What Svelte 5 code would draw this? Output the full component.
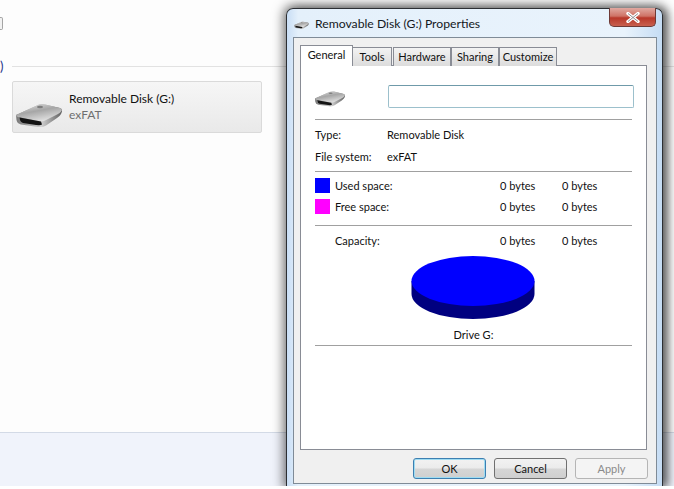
<script>
  const tabs = ['Tools', 'Hardware', 'Sharing', 'Customize'];
</script>

<svg class="defs" width="0" height="0" aria-hidden="true">
  <defs>
    <linearGradient id="topFace" x1="0" y1="0" x2="0.5" y2="1">
      <stop offset="0" stop-color="#e6e6e6" />
      <stop offset="0.5" stop-color="#a6a6a6" />
      <stop offset="1" stop-color="#dedede" />
    </linearGradient>
    <linearGradient id="frontFace" x1="0" y1="0" x2="1" y2="0">
      <stop offset="0" stop-color="#777" />
      <stop offset="0.55" stop-color="#cfcfcf" />
      <stop offset="1" stop-color="#5f5f5f" />
    </linearGradient>
    <symbol id="drive" viewBox="0 0 48 26">
      <path d="M1 13 L23 3 Q26 1.6 30 2.4 L45 6 Q47.5 7 47 9.5 L46 12 Q45 14 42 16 L31 23.5 Q28 25.5 23 25 L6 22.5 Q2 21.5 1.5 18 Z" fill="url(#frontFace)" />
      <path d="M1 13 L23 3 Q26 1.6 30 2.4 L45 6 Q47.5 7 46.5 9 Q45 11 42 12.5 L29 19 Q27 19.5 24 19 L3 15 Q1 14.5 1 13 Z" fill="url(#topFace)" />
      <path d="M4.5 15.5 L26 19.5 L27 22.5 Q26 23.5 21 23 L8 21 Q5 20 4.5 15.5 Z" fill="#141414" />
      <ellipse cx="25" cy="5" rx="3" ry="1.2" fill="#7d7d7d" />
    </symbol>
  </defs>
</svg>

<div class="screen">
  <main class="explorer">
    <div class="pane">
      <span class="checkbox"></span>
      <div class="section"><span class="paren">)</span><span class="rule"></span></div>
      <div class="card">
        <svg class="card-icon"><use href="#drive" /></svg>
        <div class="card-text">
          <div class="card-name">Removable Disk (G:)</div>
          <div class="card-fs">exFAT</div>
        </div>
      </div>
    </div>
    <div class="details"></div>
  </main>

  <section class="window">
    <header class="titlebar">
      <svg class="title-icon"><use href="#drive" /></svg>
      <span class="title">Removable Disk (G:) Properties</span>
      <button class="close" aria-label="Close">
        <svg width="16" height="11" viewBox="0 0 16 11">
          <path d="M3 1.5 L13 9.5 M13 1.5 L3 9.5" stroke="#fff" stroke-width="3.4" stroke-linecap="round" />
          <path d="M3 1.5 L13 9.5 M13 1.5 L3 9.5" stroke="#8f8f94" stroke-width="1" />
        </svg>
      </button>
    </header>

    <div class="client">
      <nav class="tabs">
        <span class="tab active">General</span>
        {#each tabs as tab}
          <span class="tab">{tab}</span>
        {/each}
      </nav>

      <div class="panel">
        <div class="name-row">
          <svg class="name-icon"><use href="#drive" /></svg>
          <input class="name-input" aria-label="Volume label" />
        </div>
        <hr />
        <div class="row type"><span class="label">Type:</span><span>Removable Disk</span></div>
        <div class="row fs"><span class="label">File system:</span><span>exFAT</span></div>
        <hr class="hr-fs" />
        <div class="space used">
          <i class="swatch blue"></i><span class="space-label">Used space:</span><span class="v1">0 bytes</span><span class="v2">0 bytes</span>
        </div>
        <div class="space free">
          <i class="swatch magenta"></i><span class="space-label">Free space:</span><span class="v1">0 bytes</span><span class="v2">0 bytes</span>
        </div>
        <hr class="hr-space" />
        <div class="space capacity">
          <i class="swatch none"></i><span class="space-label">Capacity:</span><span class="v1">0 bytes</span><span class="v2">0 bytes</span>
        </div>
        <svg class="pie" width="124" height="64" viewBox="0 0 124 64">
          <path d="M0.5 25 V38 A61.5 25 0 0 0 123.5 38 V25 Z" fill="#000080" />
          <ellipse cx="62" cy="25" rx="61.5" ry="25" fill="#0000ff" />
        </svg>
        <div class="drive-label">Drive G:</div>
        <hr class="hr-drive" />
      </div>

      <footer class="buttons">
        <button class="btn default">OK</button>
        <button class="btn">Cancel</button>
        <button class="btn disabled">Apply</button>
      </footer>
    </div>
  </section>
</div>

<style>
  :global(body) {
    margin: 0;
    background: #fff;
  }
  .defs {
    position: absolute;
  }
  .screen {
    position: relative;
    width: 674px;
    height: 486px;
    overflow: hidden;
    font-family: "Lato", "Open Sans", sans-serif;
    font-size: 11px;
    color: #111;
  }
  .explorer {
    display: flex;
    flex-direction: column;
    height: 486px;
  }
  .pane {
    height: 433px;
    background: #fdfdfd;
    border-bottom: 1px solid #d3dae6;
    box-sizing: border-box;
    padding-top: 17px;
  }
  .checkbox {
    display: block;
    width: 2px;
    height: 11px;
    border: 1px solid #a5a5a5;
    border-left: 0;
    border-radius: 0 2px 2px 0;
    background: #f2f2f2;
  }
  .section {
    display: flex;
    align-items: center;
    margin-top: 24px;
    height: 24px;
  }
  .paren {
    width: 12px;
    color: #1e3287;
    font-size: 13px;
  }
  .rule {
    flex: 1;
    height: 1px;
    background: #e2e2e2;
  }
  .card {
    display: flex;
    align-items: flex-start;
    box-sizing: border-box;
    width: 250px;
    height: 52px;
    margin: 3px 0 0 12px;
    border: 1px solid #dadada;
    border-radius: 2px;
    background: linear-gradient(#f6f6f6, #e9e9e9);
  }
  .card-icon {
    width: 48px;
    height: 26px;
    margin: 20px 0 0 2px;
    flex: none;
    filter: blur(0.4px);
  }
  .card-text {
    margin: 9px 0 0 6px;
    font-size: 12px;
    line-height: 16px;
  }
  .card-name {
    color: #111;
    white-space: nowrap;
  }
  .card-fs {
    color: #6f6f6f;
  }
  .details {
    flex: 1;
    background: #f0f3fb;
  }

  .window {
    position: absolute;
    left: 286px;
    top: 8px;
    width: 377px;
    height: 478px;
    box-sizing: border-box;
    border: 1px solid #2c2f33;
    border-bottom: 0;
    border-radius: 7px 7px 0 0;
    background: linear-gradient(90deg, #c9def5, #e4f0fb 3%, #e9f3fc 90%, #c5dcf4);
    box-shadow: 0 0 11px 3px rgba(0, 0, 0, 0.5), 5px 0 9px rgba(0, 0, 0, 0.35);
    display: flex;
    flex-direction: column;
    padding: 0 5px 2px 6px;
  }
  .titlebar {
    position: relative;
    display: flex;
    align-items: center;
    height: 28px;
    flex: none;
  }
  .title-icon {
    width: 15px;
    height: 10px;
    margin: 3px 0 0 1px;
    flex: none;
    filter: blur(0.3px);
  }
  .title {
    margin: 0 0 0 6px;
    font-size: 12.2px;
    color: #14181c;
    white-space: nowrap;
  }
  .close {
    position: absolute;
    right: 1px;
    top: -1px;
    width: 47px;
    height: 19px;
    padding: 0;
    display: flex;
    align-items: center;
    justify-content: center;
    border: 1px solid #6e3a36;
    border-top: 0;
    border-radius: 0 0 5px 5px;
    background: linear-gradient(#e0a9a1, #cf7366 45%, #b8382a 55%, #c8604f);
  }
  .client {
    flex: 1;
    min-height: 0;
    background: #f0f0f0;
    border: 1px solid #7f8b97;
    padding: 8px 9px 0 6px;
    display: flex;
    flex-direction: column;
  }
  .tabs {
    display: flex;
    align-items: flex-end;
    height: 20px;
    margin-bottom: -1px;
    position: relative;
    z-index: 1;
  }
  .tab {
    box-sizing: border-box;
    height: 19px;
    padding: 0;
    line-height: 18px;
    text-align: center;
    border: 1px solid #898c95;
    border-bottom: 0;
    margin-left: 1px;
    background: linear-gradient(#f3f3f3, #dcdcdc);
    white-space: nowrap;
  }
  .tab:nth-child(2) {
    width: 40px;
    margin-left: 0;
  }
  .tab:nth-child(3) {
    width: 58px;
  }
  .tab:nth-child(4) {
    width: 48px;
    margin-left: 0;
  }
  .tab:nth-child(5) {
    width: 58px;
    margin-left: 0;
  }
  .tab.active {
    height: 21px;
    width: 53px;
    margin-left: 0;
    margin-right: -1px;
    padding: 0;
    background: #fff;
    line-height: 18px;
    position: relative;
    z-index: 1;
  }
  .panel {
    position: relative;
    box-sizing: border-box;
    width: 347px;
    height: 385px;
    flex: none;
    background: #fff;
    border: 1px solid #898c95;
    padding: 0 14px;
  }
  .name-row {
    display: flex;
    align-items: center;
    height: 53px;
    padding-top: 8px;
    box-sizing: border-box;
  }
  .name-icon {
    width: 32px;
    height: 17px;
    flex: none;
    margin: 4px 0 0 -1px;
    filter: blur(0.3px);
  }
  .name-input {
    box-sizing: border-box;
    width: 246px;
    height: 23px;
    margin-left: 42px;
    margin-right: -2px;
    border: 1px solid #9cc0cc;
    border-top-color: #6f9aa9;
    border-radius: 2px;
    background: #fff;
    padding: 0;
    outline: 0;
  }
  hr {
    margin: 0;
    border: 0;
    height: 1px;
    background: #a0a0a0;
  }
  .row {
    display: flex;
    height: 22px;
    line-height: 22px;
  }
  .row.type {
    margin-top: 4px;
  }
  .label {
    width: 72px;
  }
  .hr-fs {
    margin-top: 3px;
  }
  .space {
    display: flex;
    align-items: center;
    height: 21px;
  }
  .space.used {
    margin-top: 3px;
  }
  .swatch {
    width: 15px;
    height: 15px;
    flex: none;
  }
  .blue {
    background: #0000ff;
  }
  .magenta {
    background: #ff00ff;
  }
  .space-label {
    width: 165px;
    margin-left: 5px;
  }
  .v1 {
    width: 62px;
  }
  .hr-space {
    margin-top: 8px;
  }
  .capacity {
    margin-top: 4px;
  }
  .pie {
    display: block;
    margin: 5px 0 0 96px;
  }
  .drive-label {
    margin-top: 7px;
    text-align: center;
    line-height: 15px;
  }
  .hr-drive {
    margin-top: 3px;
  }
  .buttons {
    display: flex;
    justify-content: flex-end;
    gap: 8px;
    margin: 8px -1px 0 0;
  }
  .btn {
    box-sizing: border-box;
    width: 73px;
    height: 21px;
    padding: 0;
    font: inherit;
    color: #111;
    border: 1px solid #707070;
    border-radius: 3px;
    background: linear-gradient(#f2f2f2, #ebebeb 48%, #d6d6d6 52%, #cfcfcf);
  }
  .btn.default {
    border-color: #3c7fb1;
    box-shadow: inset 0 0 0 1px #9fdcf2;
  }
  .btn.disabled {
    border-color: #b5b5b5;
    background: #f4f4f4;
    color: #8a8a8a;
  }
</style>
